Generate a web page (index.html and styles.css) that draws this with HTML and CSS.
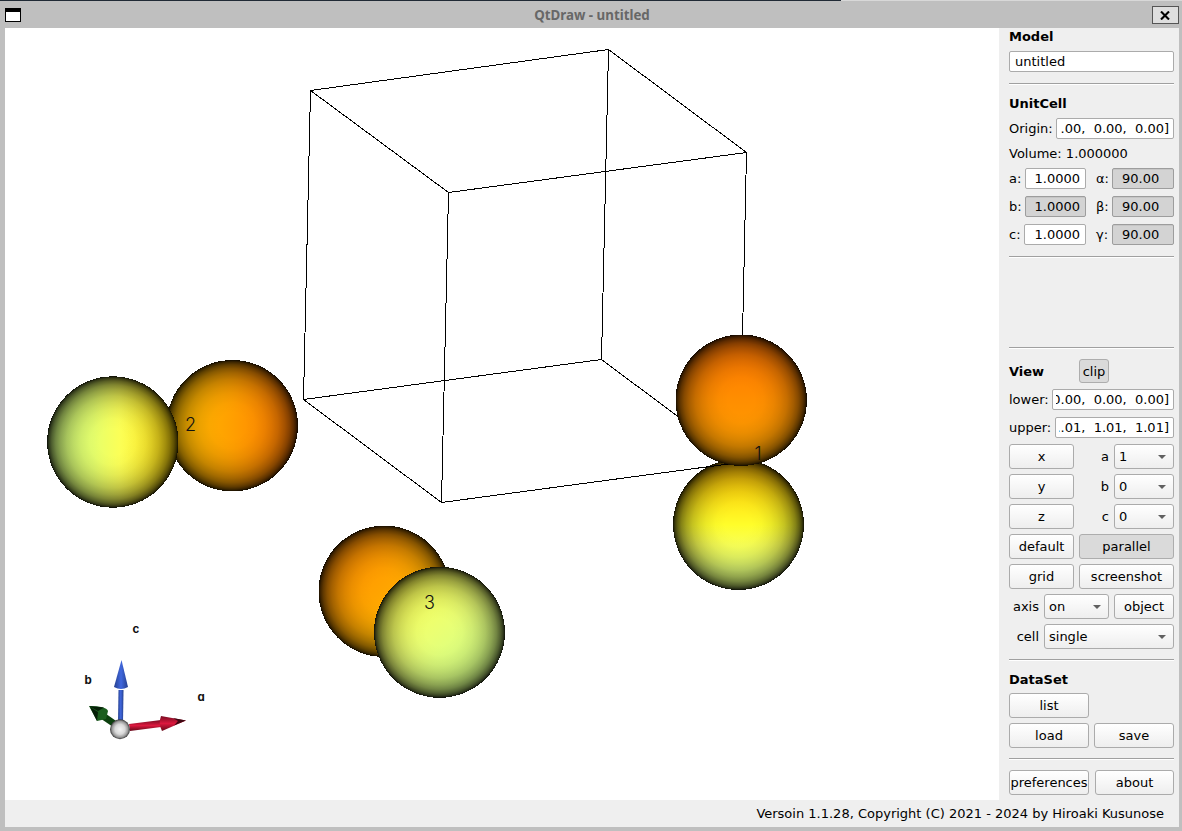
FILE: index.html
```html
<!DOCTYPE html>
<html lang="en">
<head>
<meta charset="utf-8">
<title>QtDraw - untitled</title>
<link rel="stylesheet" href="styles.css">
</head>
<body>
<div class="window">
  <header class="titlebar">
    <svg class="winicon" width="16" height="14" shape-rendering="crispEdges"><rect width="16" height="14" fill="#000"/><rect x="1" y="4" width="14" height="9" fill="#fff"/></svg>
    <span class="title">QtDraw - untitled</span>
    <button class="close"><svg width="10" height="9" viewBox="0 0 10 9"><path d="M1 .5 9 8.5M9 .5 1 8.5" stroke="#000" stroke-width="2.1"/></svg></button>
  </header>
  <main class="body">
    <svg class="scene" width="994" height="772" viewBox="5 28 994 772">
      <defs>
        <radialGradient id="shade">
          <stop offset="0" stop-opacity="0"/><stop offset=".2" stop-opacity="0"/><stop offset=".35" stop-opacity=".02"/><stop offset=".5" stop-opacity=".08"/><stop offset=".6" stop-opacity=".145"/><stop offset=".7" stop-opacity=".23"/><stop offset=".8" stop-opacity=".36"/><stop offset=".87" stop-opacity=".48"/><stop offset=".93" stop-opacity=".63"/><stop offset=".97" stop-opacity=".77"/><stop offset="1" stop-opacity=".93"/>
        </radialGradient>
        <linearGradient id="o1" x1="0" y1="0" x2="0" y2="1"><stop offset="0" stop-color="#ff7200"/><stop offset=".5" stop-color="#ff8e00"/><stop offset="1" stop-color="#ffa400"/></linearGradient>
        <linearGradient id="y1" x1="0" y1="0" x2="0" y2="1"><stop offset="0" stop-color="#ffb800"/><stop offset=".25" stop-color="#ffdc10"/><stop offset=".5" stop-color="#fffd2a"/><stop offset=".65" stop-color="#f8ff54"/><stop offset=".85" stop-color="#e4ff76"/><stop offset="1" stop-color="#dcff78"/></linearGradient>
        <linearGradient id="o2"><stop offset="0" stop-color="#ffc000"/><stop offset=".5" stop-color="#ff9f00"/><stop offset="1" stop-color="#ff7600"/></linearGradient>
        <linearGradient id="y2"><stop offset="0" stop-color="#d0ff82"/><stop offset=".35" stop-color="#e5ff6c"/><stop offset=".55" stop-color="#fbff57"/><stop offset=".75" stop-color="#fff032"/><stop offset="1" stop-color="#ffd400"/></linearGradient>
        <linearGradient id="o3" x2=".7" y2=".7"><stop offset="0" stop-color="#ff8200"/><stop offset=".7" stop-color="#ffa400"/><stop offset="1" stop-color="#ffb400"/></linearGradient>
        <linearGradient id="y3" x2=".7" y2=".9"><stop offset="0" stop-color="#fff02e"/><stop offset=".3" stop-color="#f8ff5b"/><stop offset=".6" stop-color="#eaff73"/><stop offset=".75" stop-color="#e0ff7c"/><stop offset="1" stop-color="#d4ff84"/></linearGradient>
        <radialGradient id="ball"><stop offset="0" stop-color="#f4f4f4"/><stop offset=".5" stop-color="#d9d9d9"/><stop offset=".8" stop-color="#999"/><stop offset="1" stop-color="#333"/></radialGradient>
        <linearGradient id="blue"><stop offset="0" stop-color="#253f8c"/><stop offset=".5" stop-color="#4067de"/><stop offset="1" stop-color="#253f8c"/></linearGradient>
        <linearGradient id="red" x1="0" y1="0" x2="0" y2="1"><stop offset="0" stop-color="#770c21"/><stop offset=".5" stop-color="#dc183e"/><stop offset="1" stop-color="#650819"/></linearGradient>
      </defs>
      <g class="cell" shape-rendering="crispEdges">
        <path d="M310.500 90.500 608.500 49.500 746.500 152.500 448.500 192.500ZM303.500 399.500 601.500 359.500 739.500 462.500 441.500 502.500ZM310.500 90.500 303.500 399.500M608.500 49.500 601.500 359.500M746.500 152.500 742.500 336M448.500 192.500 441.500 502.500"/>
      </g>
      <g shape-rendering="crispEdges">
        <g fill="url(#y1)"><circle cx="738.500" cy="524.500" r="65.500"/><circle cx="738.500" cy="524.500" r="65.500" fill="url(#shade)"/></g>
        <path d="M700 468 724 464.500 740 463.500" stroke="#000" fill="none"/>
        <g fill="url(#o1)"><circle cx="741.200" cy="400.200" r="65.700"/><circle cx="741.200" cy="400.200" r="65.700" fill="url(#shade)"/></g>
        <g fill="url(#o2)"><circle cx="232.300" cy="425.700" r="65.700"/><circle cx="232.300" cy="425.700" r="65.700" fill="url(#shade)"/></g>
        <g fill="url(#y2)"><circle cx="112.800" cy="442" r="65.700"/><circle cx="112.800" cy="442" r="65.700" fill="url(#shade)"/></g>
        <g fill="url(#o3)"><circle cx="384.200" cy="591.300" r="65.700"/><circle cx="384.200" cy="591.300" r="65.700" fill="url(#shade)"/></g>
        <g fill="url(#y3)"><circle cx="439.500" cy="632.300" r="65.500"/><circle cx="439.500" cy="632.300" r="65.500" fill="url(#shade)"/></g>
      </g>
      <g class="site"><text x="754.500" y="459.500">1</text><text x="185" y="431">2</text><text x="424" y="609">3</text></g>
      <path d="M119 723 99 709 94 714 116 729Z" fill="#0c400e"/>
      <path d="M89 706 Q106 706 108 711L106 719 97 721Z" fill="#1b5e1e"/><path d="M89 706 104 707.500 98 711ZM97 721 98 712 90 707Z" fill="#061f08"/>
      <path d="M118.500 690h5l-.5 32h-5Z" fill="url(#blue)"/><path d="M121.500 660 128 687q-7 4-14 0Z" fill="url(#blue)"/>
      <path d="M129 724 161 720 161 727 130 731Z" fill="url(#red)"/><path d="M161 716 186 720.500 162 731Q158 724 161 716Z" fill="url(#red)"/><path d="M173 718 186 720.500 174 725.500 178 721Z" fill="#3d0812"/>
      <circle cx="120" cy="729.300" r="10" fill="url(#ball)"/>
      <g class="axes"><text x="132.500" y="633">c</text><text x="84.500" y="684">b</text><text x="197.500" y="701">a</text></g>
    </svg>
    <aside class="panel">
      <h2 class="head">Model</h2>
      <div class="row field-row model"><div class="input text">untitled</div></div>
      <hr>
      <h2 class="head unit">UnitCell</h2>
      <div class="row field-row"><label>Origin:</label><div class="input vector origin"><span>.00,&nbsp; 0.00,&nbsp; 0.00]</span></div></div>
      <div class="row volume">Volume: 1.000000</div>
      <div class="row field-row"><label>a:</label><div class="input num">1.0000</div><label class="greek">α:</label><div class="input angle off">90.00</div></div>
      <div class="row field-row spaced"><label>b:</label><div class="input num off">1.0000</div><label class="greek">β:</label><div class="input angle off">90.00</div></div>
      <div class="row field-row spaced"><label>c:</label><div class="input num wide">1.0000</div><label class="greek">γ:</label><div class="input angle off">90.00</div></div>
      <hr class="after-cell">
      <hr class="before-view">
      <div class="row view"><h2>View</h2><button class="btn down clip">clip</button></div>
      <div class="row field-row lower"><label>lower:</label><div class="input vector low"><span>0.00,&nbsp; 0.00,&nbsp; 0.00]</span></div></div>
      <div class="row field-row spaced"><label>upper:</label><div class="input vector up"><span>..01,&nbsp; 1.01,&nbsp; 1.01]</span></div></div>
      <div class="controls">
        <div class="row"><button class="btn w65">x</button><label class="end grow">a</label><div class="combo w60">1</div></div>
        <div class="row"><button class="btn w65">y</button><label class="end grow">b</label><div class="combo w60">0</div></div>
        <div class="row"><button class="btn w65">z</button><label class="end grow">c</label><div class="combo w60">0</div></div>
        <div class="row"><button class="btn w65">default</button><button class="btn down grow">parallel</button></div>
        <div class="row"><button class="btn w65">grid</button><button class="btn grow">screenshot</button></div>
        <div class="row"><label class="end w30">axis</label><div class="combo w65">on</div><button class="btn w60">object</button></div>
        <div class="row"><label class="end w30">cell</label><div class="combo grow">single</div></div>
      </div>
      <hr class="after-controls">
      <h2 class="head data">DataSet</h2>
      <div class="row"><button class="btn w80">list</button></div>
      <div class="row load"><button class="btn w80">load</button><button class="btn w80">save</button></div>
      <hr class="after-data">
      <div class="row foot"><button class="btn w80">preferences</button><button class="btn w79">about</button></div>
    </aside>
  </main>
  <footer class="status">Versoin 1.1.28, Copyright (C) 2021 - 2024 by Hiroaki Kusunose</footer>
</div>
</body>
</html>
```

FILE: styles.css
```css
* { box-sizing: border-box; }
body { margin: 0; background: #bfbfbf; font: 13px "DejaVu Sans", sans-serif; color: #000; }
.window { width: 1182px; height: 831px; padding: 0 3px 4px 5px; display: flex; flex-direction: column; background: linear-gradient(90deg, #202a35 841px, #d8d8d8 841px) 0 0 / 100% 1px no-repeat #bfbfbf; }
.titlebar { height: 28px; flex: none; display: flex; align-items: center; padding-top: 2px; }
.winicon { width: 16px; height: 14px; }
.title { flex: 1; text-align: center; font-weight: bold; font-size: 13.333px; color: #676767; font-family: "Noto Sans", sans-serif; padding-left: 11px; }
.close { width: 27px; height: 18px; padding: 0 1px 0 0; display: flex; align-items: center; justify-content: center; background: #dedede; border: 1px solid #555; }
.body { display: flex; flex: none; height: 772px; }
.scene { display: block; flex: none; background: #fff; }
.cell { fill: none; stroke: #000; stroke-width: 1; }
.site { font: 300 18px Inter, sans-serif; fill: #111; }
.axes { font: bold 11.5px Inter, sans-serif; font-feature-settings: "cv11"; fill: #111; }
.panel { width: 180px; padding: 0 5px 0 10px; background: #efefef; }
h2 { margin: 0; font-size: 13px; font-weight: bold; line-height: 16px; }
.head { height: 23px; padding-top: 1px; }
.row { display: flex; align-items: center; gap: 5px; white-space: nowrap; }
.field-row { height: 21px; justify-content: space-between; gap: 0; }
.spaced { margin-top: 7px; }
hr { margin: 11px 0 0; border: 0; border-top: 1px solid #a0a0a0; border-bottom: 1px solid #fff; height: 2px; }
.unit { margin-top: 10px; }
.volume { height: 29px; }
.after-cell { margin-top: 11px; }
.before-view { margin-top: 89px; }
.view { margin-top: 10px; height: 24px; }
.view h2 { width: 65px; padding-top: 1px; }
.lower { margin-top: 6px; }
.input { height: 21px; line-height: 19px; padding: 0 4px; background: #fff; border: 1px solid #ababab; border-radius: 2px; overflow: hidden; }
.text { width: 165px; padding-left: 5px; }
.vector { display: flex; padding: 0; }
.vector span { flex: 1; display: flex; justify-content: flex-end; overflow: hidden; margin: 0 4px 0 3px; white-space: pre; }
.origin { width: 118px; }
.low { width: 122px; }
.up { width: 119px; }
.num { width: 61px; text-align: right; padding-right: 5px; margin: 0 10px 0 auto; }
.wide { width: 62px; }
.greek { width: 16px; }
.angle { width: 62px; padding-left: 9px; }
.off { background: #d3d3d3; border-color: #9d9d9d; box-shadow: inset 0 1px #c6c6c6; }
.btn, .combo { height: 25px; padding: 0; flex: none; font: inherit; color: #000; text-align: center; border: 1px solid #ababab; border-radius: 3px; background: linear-gradient(#fff, #eee); }
.btn { line-height: 23px; }
.down { background: #dadada; border-color: #adadad; }
.clip { width: 30px; height: 24px; }
.combo { position: relative; text-align: left; padding-left: 4px; line-height: 23px; }
.combo::after { content: ""; position: absolute; right: 7px; top: 10px; border: 4px solid transparent; border-top-color: #606060; border-bottom: 0; }
.btn.grow, .combo.grow, .grow { flex: 1; }
.controls { display: flex; flex-direction: column; gap: 5px; margin-top: 6px; }
.end { text-align: right; }
.w30 { width: 30px; }
.w60 { width: 60px; }
.w65 { width: 65px; }
.w79 { width: 79px; }
.w80 { width: 80px; }
.after-controls { margin-top: 10px; }
.data { margin-top: 10px; height: 22px; padding-top: 1px; }
.load { margin-top: 5px; }
.after-data { margin-top: 10px; }
.foot { margin-top: 10px; justify-content: space-between; gap: 0; }
.status { height: 27px; flex: none; background: #efefef; text-align: right; line-height: 27px; padding-right: 15px; }
```
